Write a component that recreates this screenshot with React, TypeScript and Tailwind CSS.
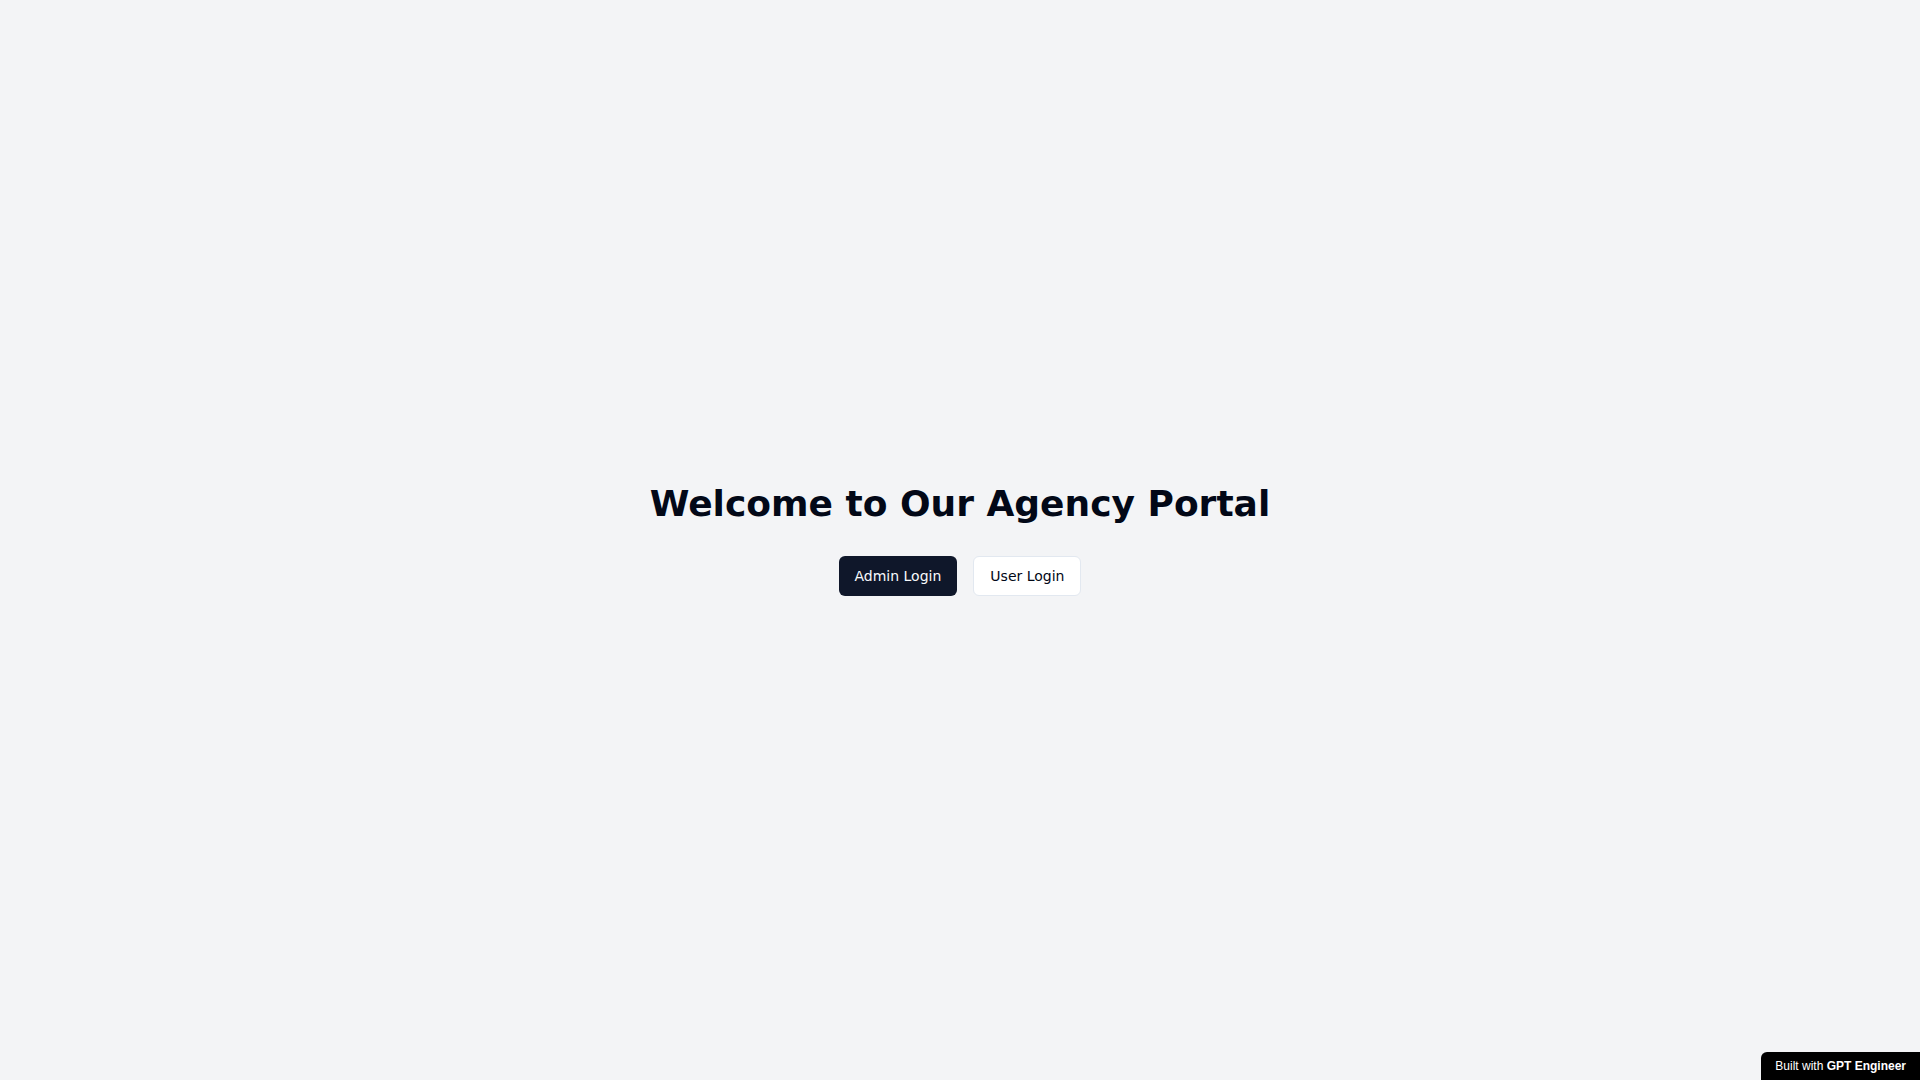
export default function App() {
  return (
    <div className="min-h-screen bg-gray-100 flex items-center justify-center font-['DejaVu_Sans',sans-serif]">
      <div className="text-center">
        <h1 className="text-4xl font-bold mb-8 text-[#020817]">Welcome to Our Agency Portal</h1>
        <div className="flex justify-center gap-4">
          <button className="h-10 px-4 py-2 rounded-md bg-[#0f172a] text-[#f8fafc] text-sm">Admin Login</button>
          <button className="h-10 px-4 py-2 rounded-md bg-white border border-[#e2e8f0] text-[#020817] text-sm">User Login</button>
        </div>
      </div>
      <div className="fixed bottom-0 right-0 bg-black text-white px-[14px] h-7 flex items-center rounded-tl-md text-xs font-['Liberation_Sans',sans-serif]">
        Built with&nbsp;<span className="font-bold">GPT Engineer</span>
      </div>
    </div>
  );
}
